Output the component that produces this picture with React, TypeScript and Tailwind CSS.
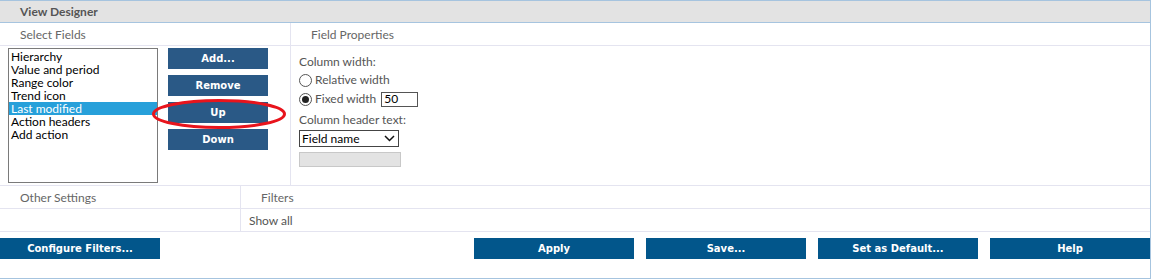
import React from "react";

const topBtn =
  "w-[100px] h-[21px] bg-[#2a5986] text-white font-bold text-[10px] flex items-center justify-center font-['DejaVu_Sans',sans-serif]";
const botBtn =
  "w-[160px] h-[21px] bg-[#02568b] text-white font-bold text-[10px] flex items-center justify-center font-['DejaVu_Sans',sans-serif]";

function Radio({ checked }: { checked?: boolean }) {
  return (
    <span className="w-[13px] h-[13px] rounded-full border border-[#555] bg-white flex items-center justify-center shrink-0">
      {checked && <span className="w-[7px] h-[7px] rounded-full bg-[#222]" />}
    </span>
  );
}

export default function App() {
  const items = [
    "Hierarchy",
    "Value and period",
    "Range color",
    "Trend icon",
    "Last modified",
    "Action headers",
    "Add action",
  ];
  return (
    <div className="w-[1151px] h-[279px] bg-white flex flex-col border-t border-r border-b border-[#a6c4df] font-['Lato',sans-serif] text-[12px] leading-[14px]">
      <div className="h-[22px] bg-[#e3e3e3] border-b border-[#a6c4df] pl-[20px] pt-[1px] flex items-center font-bold text-[#555] shrink-0">
        View Designer
      </div>
      <div className="flex h-[163px] border-b border-[#e4e4f0] shrink-0">
        <div className="w-[291px] border-r border-[#e4e4f0] flex flex-col">
          <div className="h-[23px] border-b border-[#e4e4f0] pl-[20px] pt-[2px] flex items-center text-[#666]">
            Select Fields
          </div>
          <div className="flex pl-[8px] pt-[2px] gap-[10px]">
            <div className="w-[150px] h-[135px] border border-[#7a7a7a] pt-[1px] flex flex-col">
              {items.map((t) => (
                <div
                  key={t}
                  className={
                    "h-[13px] leading-[13px] pl-[2px] " +
                    (t === "Last modified" ? "bg-[#27a0da] text-white" : "text-black")
                  }
                >
                  {t}
                </div>
              ))}
            </div>
            <div className="relative flex flex-col gap-[6px]">
              <div className={topBtn}>Add...</div>
              <div className={topBtn}>Remove</div>
              <div className={topBtn}>Up</div>
              <div className={topBtn}>Down</div>
              <svg
                className="absolute left-[-16px] top-[51px] overflow-visible"
                width="134"
                height="30"
                viewBox="0 0 134 30"
              >
                <ellipse cx="67" cy="15" rx="65.5" ry="13.5" fill="none" stroke="#e8141c" strokeWidth="3" />
              </svg>
            </div>
          </div>
        </div>
        <div className="flex-1 flex flex-col">
          <div className="h-[23px] border-b border-[#e4e4f0] pl-[20px] pt-[2px] flex items-center text-[#666]">
            Field Properties
          </div>
          <div className="pl-[8px] pt-[9px] flex flex-col text-[#555]">
            <div className="h-[14px] flex items-center">Column width:</div>
            <div className="h-[18px] mt-[2px] flex items-center gap-[3px]">
              <Radio />
              <span>Relative width</span>
            </div>
            <div className="h-[18px] mt-[1px] flex items-center gap-[3px]">
              <Radio checked />
              <span>Fixed width</span>
              <div className="ml-[2px] w-[37px] h-[15px] border border-[#555] bg-white text-black pl-[2px] flex items-center">
                50
              </div>
            </div>
            <div className="h-[14px] mt-[5px] flex items-center">Column header text:</div>
            <div className="mt-[3px] w-[100px] h-[17px] border border-[#444] bg-white text-black flex items-center justify-between pl-[2px] pr-[3px]">
              <span>Field name</span>
              <svg width="11" height="7" viewBox="0 0 11 7">
                <path d="M1 1 L5.5 5.5 L10 1" fill="none" stroke="#111" strokeWidth="1.5" />
              </svg>
            </div>
            <div className="mt-[5px] w-[102px] h-[15px] bg-[#e3e3e3] border border-[#c8c8c8]" />
          </div>
        </div>
      </div>
      <div className="flex h-[23px] border-b border-[#e4e4f0] shrink-0 text-[#666]">
        <div className="w-[241px] border-r border-[#e4e4f0] pl-[20px] pt-[1px] flex items-center">Other Settings</div>
        <div className="flex-1 pl-[20px] pt-[1px] flex items-center">Filters</div>
      </div>
      <div className="flex h-[23px] border-b border-[#e4e4f0] shrink-0 text-[#555]">
        <div className="w-[241px] border-r border-[#e4e4f0]" />
        <div className="flex-1 pl-[8px] pt-[1px] flex items-center">Show all</div>
      </div>
      <div className="flex mt-[6px] items-start">
        <div className={botBtn}>Configure Filters...</div>
        <div className="flex-1" />
        <div className="flex gap-[12px]">
          <div className={botBtn}>Apply</div>
          <div className={botBtn}>Save...</div>
          <div className={botBtn}>Set as Default...</div>
          <div className={botBtn}>Help</div>
        </div>
      </div>
    </div>
  );
}
